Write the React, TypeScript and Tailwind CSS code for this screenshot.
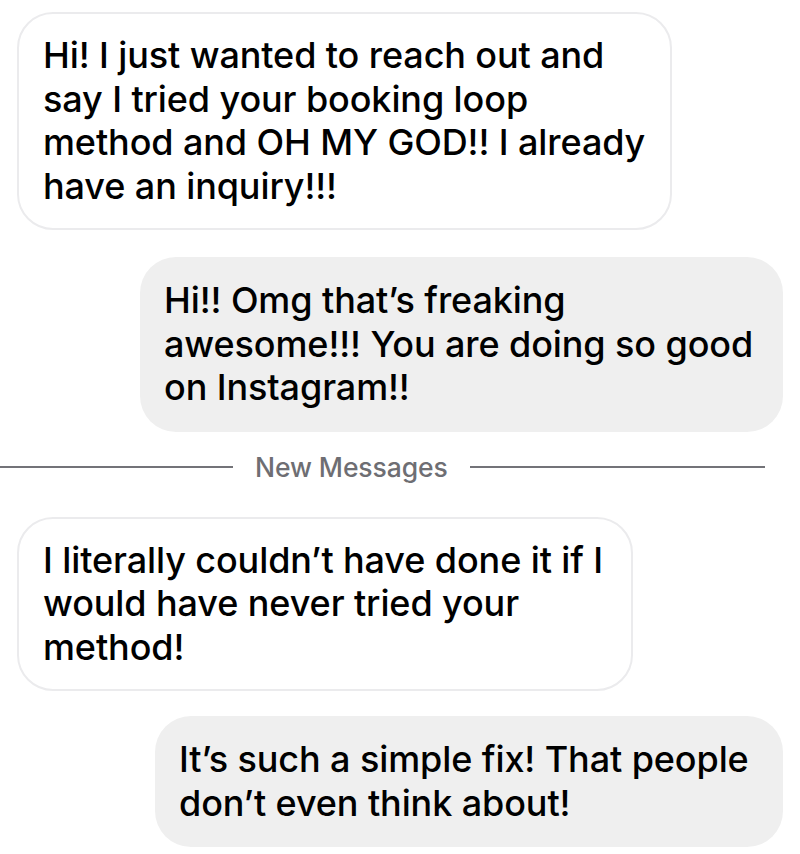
import React from 'react';

type Msg = { lines: string[]; mine: boolean; width: string };

const before: Msg[] = [
  {
    lines: ['Hi! I just wanted to reach out and', 'say I tried your booking loop', 'method and OH MY GOD!! I already', 'have an inquiry!!!'],
    mine: false,
    width: 'w-[655px]',
  },
  {
    lines: ['Hi!! Omg that\u2019s freaking', 'awesome!!! You are doing so good', 'on Instagram!!'],
    mine: true,
    width: 'w-[643px]',
  },
];

const after: Msg[] = [
  {
    lines: ['I literally couldn\u2019t have done it if I', 'would have never tried your', 'method!'],
    mine: false,
    width: 'w-[616px]',
  },
  {
    lines: ['It\u2019s such a simple fix! That people', 'don\u2019t even think about!'],
    mine: true,
    width: 'w-[628px]',
  },
];

function Bubble({ msg }: { msg: Msg }) {
  return (
    <div
      className={`${msg.width} rounded-[36px] px-[24px] text-[36px] leading-[43.5px] font-medium text-black whitespace-nowrap ${
        msg.mine
          ? 'self-end mr-[17px] py-[22px] bg-[#efefef]'
          : 'self-start ml-[17px] py-[20px] bg-white border-2 border-[#ebebed]'
      }`}
    >
      {msg.lines.map((line, i) => (
        <div key={i}>{line}</div>
      ))}
    </div>
  );
}

export default function App() {
  return (
    <div
      className="w-[800px] h-[854px] bg-white flex flex-col overflow-hidden pt-[12px] tracking-[-0.1px]"
      style={{ fontFamily: 'Inter, "Noto Sans", sans-serif' }}
    >
      <Bubble msg={before[0]} />
      <div className="mt-[27px] flex flex-col">
        <Bubble msg={before[1]} />
      </div>

      {/* divider */}
      <div className="mt-[20px] flex items-center h-[30px] pr-[35px]">
        <div className="w-[233px] h-[2px] bg-[#737378]" />
        <span className="mx-[22px] text-[26.5px] leading-[30px] font-medium text-[#6e6e73]">New Messages</span>
        <div className="flex-1 h-[2px] bg-[#737378]" />
      </div>

      <div className="mt-[35px] flex flex-col">
        <Bubble msg={after[0]} />
      </div>
      <div className="mt-[25px] flex flex-col">
        <Bubble msg={after[1]} />
      </div>
    </div>
  );
}
